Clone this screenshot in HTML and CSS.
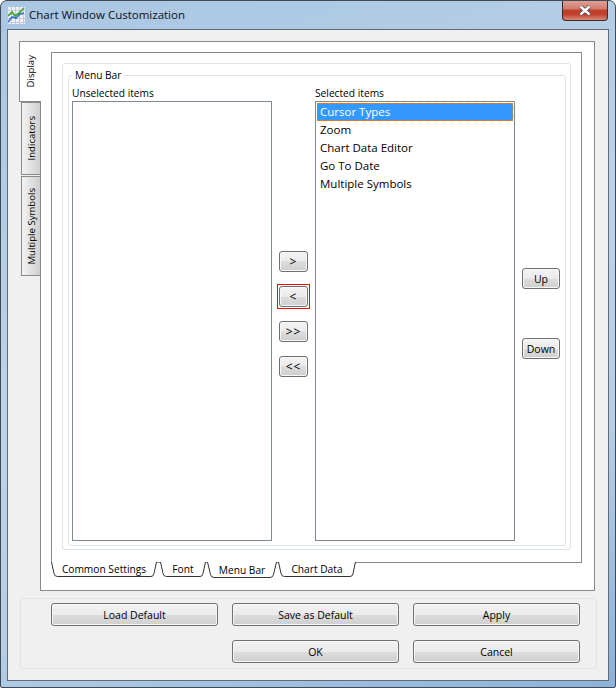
FILE: index.html
```html
<!DOCTYPE html>
<html lang="en">
<head>
<meta charset="utf-8">
<title>Chart Window Customization</title>
<link rel="stylesheet" href="styles.css">
</head>
<body>
<div class="window">
  <header class="titlebar">
    <svg class="app-icon" width="17" height="17" viewBox="0 0 17 17">
      <rect x="0" y="0" width="17" height="17" fill="#eef0f6"/>
      <path d="M3.5 0V17M7.5 0V17M11.5 0V17M15.5 0V17M0 3.5H17M0 7.5H17M0 11.5H17M0 15.5H17" stroke="#c6c8da" stroke-width="1" fill="none"/>
      <path d="M0 15L4 10L8 11L12 7L16 6" stroke="#2f73c8" stroke-width="1.6" fill="none"/>
      <path d="M0 9L4 5L7 9L11 6L16 1" stroke="#3fa52f" stroke-width="1.7" fill="none"/>
    </svg>
    <span class="title">Chart Window Customization</span>
    <div class="close">
      <svg width="14" height="11" viewBox="0 0 14 11"><path d="M2.5 1.5L11.5 9.5M11.5 1.5L2.5 9.5" stroke="#3c4a55" stroke-width="3.8" fill="none"/><path d="M2.5 1.5L11.5 9.5M11.5 1.5L2.5 9.5" stroke="#fff" stroke-width="2.4" fill="none"/></svg>
    </div>
  </header>
  <main class="client">
    <div class="main-tabs">
      <nav class="side-tabs">
        <div class="side-tab side-tab-active"><span>Display</span></div>
        <div class="side-tab side-tab-indicators"><span>Indicators</span></div>
        <div class="side-tab side-tab-symbols"><span>Multiple Symbols</span></div>
      </nav>
      <section class="main-pane">
        <div class="sub-pane">
          <div class="outer-group">
            <fieldset class="menu-group">
              <legend>Menu Bar</legend>
              <div class="columns">
                <div class="list-col">
                  <label class="list-label">Unselected items</label>
                  <div class="listbox"></div>
                </div>
                <div class="move-col">
                  <button class="btn small">&gt;</button>
                  <div class="marked"><button class="btn small">&lt;</button></div>
                  <button class="btn small">&gt;&gt;</button>
                  <button class="btn small">&lt;&lt;</button>
                </div>
                <div class="list-col">
                  <label class="list-label">Selected items</label>
                  <div class="listbox">
                    <div class="item item-selected">Cursor Types</div>
                    <div class="item">Zoom</div>
                    <div class="item">Chart Data Editor</div>
                    <div class="item">Go To Date</div>
                    <div class="item">Multiple Symbols</div>
                  </div>
                </div>
                <div class="order-col">
                  <button class="btn order">Up</button>
                  <button class="btn order">Down</button>
                </div>
              </div>
            </fieldset>
          </div>
        </div>
        <div class="bottom-tabs">
          <div class="bottom-tab tab-common">
            <svg width="106" height="16" viewBox="0 0 106 16"><path d="M0.5 0L3 11.5Q3.6 14.5 6.5 14.5H100Q102.5 14.5 103 11.5L105.5 0" fill="#fff" stroke="#333"/></svg>
            <span>Common Settings</span>
          </div>
          <div class="bottom-tab tab-font">
            <svg width="46" height="16" viewBox="0 0 46 16"><path d="M0.5 0L3 11.5Q3.6 14.5 6.5 14.5H40Q42.5 14.5 43 11.5L45.5 0" fill="#fff" stroke="#333"/></svg>
            <span>Font</span>
          </div>
          <div class="bottom-tab tab-menu">
            <svg width="70" height="17" viewBox="0 0 70 17"><path d="M0.5 0L3.5 12.5Q4 15.5 7 15.5H63Q66 15.5 66.5 12.5L69.5 0" fill="#fff" stroke="#333"/></svg>
            <span>Menu Bar</span>
          </div>
          <div class="bottom-tab tab-chart">
            <svg width="78" height="16" viewBox="0 0 78 16"><path d="M0.5 0L3 11.5Q3.6 14.5 6.5 14.5H72Q74.5 14.5 75 11.5L77.5 0" fill="#fff" stroke="#333"/></svg>
            <span>Chart Data</span>
          </div>
        </div>
      </section>
    </div>
    <footer class="actions">
      <button class="btn wide">Load Default</button>
      <button class="btn wide">Save as Default</button>
      <button class="btn wide">Apply</button>
      <button class="btn wide ok">OK</button>
      <button class="btn wide">Cancel</button>
    </footer>
  </main>
</div>
</body>
</html>
```
FILE: styles.css
```css
* { box-sizing: border-box; }
html, body { margin: 0; padding: 0; }
body {
  width: 616px;
  height: 688px;
  background: #fff;
  font-family: "Open Sans", "Noto Sans", sans-serif;
  font-size: 10.2px;
  color: #000;
  overflow: hidden;
}
.window {
  width: 616px;
  height: 688px;
  display: flex;
  flex-direction: column;
  padding: 0 6px 6px;
  border: 1px solid #3f4a55;
  border-radius: 7px 7px 2px 2px;
  background: linear-gradient(160deg, #a9c6e2 0%, #bcd3e8 45%, #b7cfe6 70%, #8db2d8 100%);
}
.titlebar {
  height: 28px;
  flex: none;
  display: flex;
  align-items: flex-start;
  padding-top: 6px;
}
.app-icon { flex: none; margin: 0 4px 0 1px; }
.title {
  font-size: 11.5px;
  color: #0a1220;
}
.close {
  margin-left: auto;
  margin-top: -6px;
  margin-right: 1px;
  width: 46px;
  height: 20px;
  border: 1px solid #3b2a2a;
  border-top: none;
  border-radius: 0 0 4px 4px;
  background: linear-gradient(#e0a094 0%, #d27d6e 40%, #c23f2c 50%, #c23f2c 70%, #d8897a 100%);
  display: flex;
  align-items: center;
  justify-content: center;
}
.client {
  flex: 1;
  min-height: 0;
  border: 1px solid #5f6b76;
  background: #f0f0f0;
  display: flex;
  flex-direction: column;
  padding: 11px 13px 12px 11px;
}
.main-tabs {
  display: flex;
  height: 550px;
  flex: none;
}
.side-tabs {
  width: 21px;
  flex: none;
  display: flex;
  flex-direction: column;
  position: relative;
  z-index: 1;
  font-size: 9.6px;
}
.side-tab {
  width: 19px;
  margin-left: 2px;
  border: 1px solid #8a8a8a;
  border-right: none;
  background: linear-gradient(90deg, #f3f3f3, #cfcfcf);
  display: flex;
  align-items: center;
  justify-content: center;
}
.side-tab span {
  writing-mode: vertical-rl;
  transform: rotate(180deg);
  white-space: nowrap;
}
.side-tab-active {
  width: 22px;
  margin-left: 0;
  height: 61px;
  background: #fff;
  border-color: #8a8a8a;
}
.side-tab-indicators { height: 73px; }
.side-tab-symbols { height: 100px; margin-top: 1px; }
.main-pane {
  flex: 1;
  min-width: 0;
  border: 1px solid #8a8a8a;
  background: #fff;
  display: flex;
  flex-direction: column;
  padding: 10px 12px 0 10px;
}
.sub-pane {
  height: 511px;
  flex: none;
  border: 1px solid #8a8a8a;
  padding: 10px 10px 12px;
  background: #fff;
}
.outer-group {
  height: 100%;
  border: 1px solid #dde4ec;
  border-radius: 3px;
  padding: 4px 4px 3px 5px;
}
.menu-group {
  height: 100%;
  margin: 0;
  min-width: 0;
  border: 1px solid #dde4ec;
  border-radius: 3px;
  padding: 5px 3px 4px 3px;
}
legend {
  margin-left: 0;
  padding: 0 3px;
  line-height: 14px;
}
.columns { display: flex; }
.list-col {
  width: 200px;
  flex: none;
  display: flex;
  flex-direction: column;
}
.list-label {
  height: 14px;
  line-height: 13px;
  display: block;
}
.listbox {
  height: 440px;
  border: 1px solid #7f8a96;
  background: #fff;
  padding: 1px;
}
.item {
  height: 18px;
  line-height: 18px;
  padding-left: 3px;
  font-size: 11.5px;
}
.item-selected {
  background: #3399ff;
  color: #fff;
  outline: 1px dotted #f08010;
  outline-offset: -1px;
}
.move-col {
  width: 43px;
  flex: none;
  display: flex;
  flex-direction: column;
  align-items: center;
  gap: 14px;
  padding-top: 164px;
}
.order-col {
  flex: none;
  margin-left: 7px;
  display: flex;
  flex-direction: column;
  gap: 49px;
  padding-top: 181px;
}
.btn {
  font: inherit;
  font-size: 10.5px;
  color: #000;
  padding: 0;
  border: 1px solid #707070;
  border-radius: 3px;
  background: linear-gradient(#f3f3f3 0%, #ebebeb 50%, #dddddd 50%, #cfcfcf 100%);
  box-shadow: inset 0 0 0 1px #f7f7f7;
}
.small {
  width: 29px;
  height: 21px;
  display: block;
  font-size: 12px;
  letter-spacing: 1px;
}
.order { width: 38px; height: 21px; }
.marked {
  border: 1px solid #f00;
  padding: 1px;
  margin: -2px 0;
}
.bottom-tabs {
  display: flex;
  height: 16px;
}
.bottom-tab {
  position: relative;
  margin-top: -1px;
  height: 16px;
  display: flex;
  justify-content: center;
  align-items: flex-start;
}
.bottom-tab svg { position: absolute; left: 0; top: 0; }
.bottom-tab span { position: relative; line-height: 14px; }
.tab-common { width: 106px; margin-right: 3px; }
.tab-font { width: 46px; margin-right: 1px; }
.tab-menu { width: 70px; margin-right: 1px; height: 17px; padding-top: 1px; }
.tab-chart { width: 78px; }
.actions {
  margin-top: 7px;
  margin-left: 1px;
  height: 71px;
  flex: none;
  border: 1px solid #e2e5e8;
  border-radius: 3px;
  width: 577px;
  display: grid;
  grid-template-columns: repeat(3, 167px);
  grid-template-rows: 23px 23px;
  column-gap: 14px;
  row-gap: 14px;
  padding: 4px 0 0 30px;
}
.wide { width: 167px; height: 23px; }
.ok { grid-column: 2; }
```
